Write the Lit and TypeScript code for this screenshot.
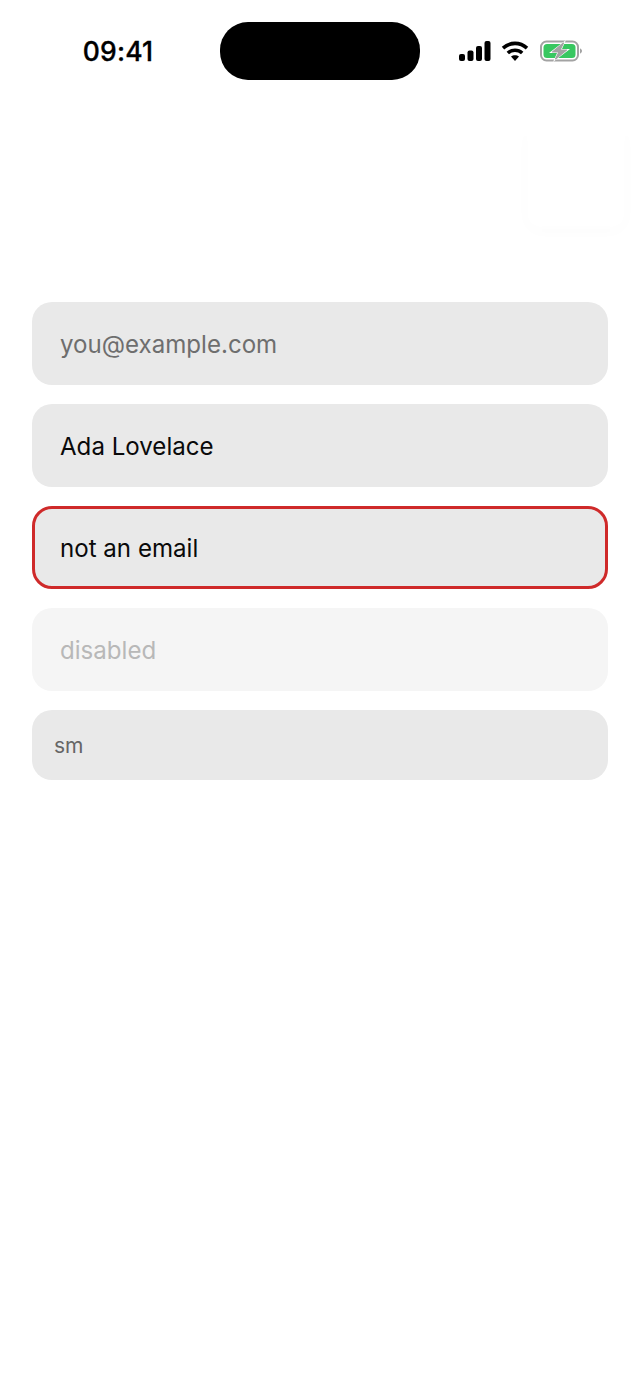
import { LitElement, html, css } from "lit";
import { customElement } from "lit/decorators.js";

@customElement("app-root")
export class AppRoot extends LitElement {
  static styles = css`
    :host {
      display: block;
      position: relative;
      width: 640px;
      height: 1391px;
      background: #fff;
      overflow: hidden;
      font-family: Inter, "Liberation Sans", sans-serif;
    }
    .status {
      display: grid;
      grid-template-columns: 220px 200px 220px;
      height: 58px;
      padding-top: 22px;
      align-items: center;
    }
    .time {
      font-size: 26.5px;
      font-weight: 500;
      color: #000;
      text-align: center;
      padding-left: 16px;
      letter-spacing: 0.2px;
      -webkit-text-stroke: 0.3px #000;
    }
    .island {
      width: 200px;
      height: 58px;
      border-radius: 28px;
      background: #000;
    }
    .icons {
      display: flex;
      align-items: center;
      gap: 10px;
      padding-left: 39px;
    }
    .icons svg { display: block; }
    .ghost {
      position: absolute;
      left: 527px;
      top: 126px;
      width: 98px;
      height: 102px;
      border-radius: 14px;
      box-shadow: 0 3px 14px rgba(0, 0, 0, 0.02);
      filter: blur(2px);
    }
    .form {
      display: flex;
      flex-direction: column;
      gap: 19.5px;
      margin: 222px 32px 0;
    }
    .field {
      box-sizing: border-box;
      height: 82.6px;
      display: flex;
      align-items: center;
      padding: 2px 28px 0;
      border-radius: 20px;
      background: #e9e9e9;
      font-size: 24.1px;
      color: #0a0a0a;
    }
    .placeholder { color: #6e6e6e; }
    .error { border: 3px solid #cf2a2a; padding: 2px 25px 0; }
    .disabled { background: #f5f5f5; color: #b8b8b8; }
    .sm {
      height: 70px;
      padding: 0 22px;
      font-size: 21px;
      color: #666;
    }
  `;

  render() {
    return html`
      <div class="status">
        <div class="time">09:41</div>
        <div class="island"></div>
        <div class="icons">
          <svg width="32" height="22" viewBox="0 0 32 22">
            <rect x="0" y="14" width="6" height="7" rx="2" fill="#000"></rect>
            <rect x="8.5" y="10.500" width="6" height="10.500" rx="2" fill="#000"></rect>
            <rect x="17" y="6" width="6" height="15" rx="2" fill="#000"></rect>
            <rect x="25.500" y="1" width="6" height="20" rx="2" fill="#000"></rect>
          </svg>
          <svg width="28" height="22" viewBox="0 0 28 22" fill="none" stroke="#000" stroke-width="3.6">
            <path d="M2 8.200C9 1.800 19 1.800 26 8.200"></path>
            <path d="M6.800 13C11 9.300 17 9.300 21.200 13"></path>
            <path d="M14 21L10 16.600C12.200 14.800 15.800 14.800 18 16.600Z" fill="#000" stroke="none"></path>
          </svg>
          <svg width="44" height="22" viewBox="0 0 44 22">
            <rect x="2" y="1.500" width="37" height="19" rx="5.500" fill="#fff" stroke="#a3a3a3" stroke-width="2"></rect>
            <rect x="4.500" y="4" width="32" height="14" rx="3.500" fill="#38c760"></rect>
            <path d="M41 8.500v5c1.200-.3 2-1.300 2-2.500s-.8-2.200-2-2.500Z" fill="#a3a3a3"></path>
            <path d="M27 0L10 13H18L14 22L31 9H23Z" fill="#fff"></path>
            <path d="M24.500 3L13.500 12H20L16.500 19L27.500 10H21Z" fill="#a3a3a3" stroke="#a3a3a3" stroke-width="1.200" stroke-linejoin="round"></path>
          </svg>
        </div>
      </div>
      <div class="ghost"></div>
      <div class="form">
        <div class="field placeholder">you@example.com</div>
        <div class="field">Ada Lovelace</div>
        <div class="field error">not an email</div>
        <div class="field disabled">disabled</div>
        <div class="field sm">sm</div>
      </div>
    `;
  }
}
